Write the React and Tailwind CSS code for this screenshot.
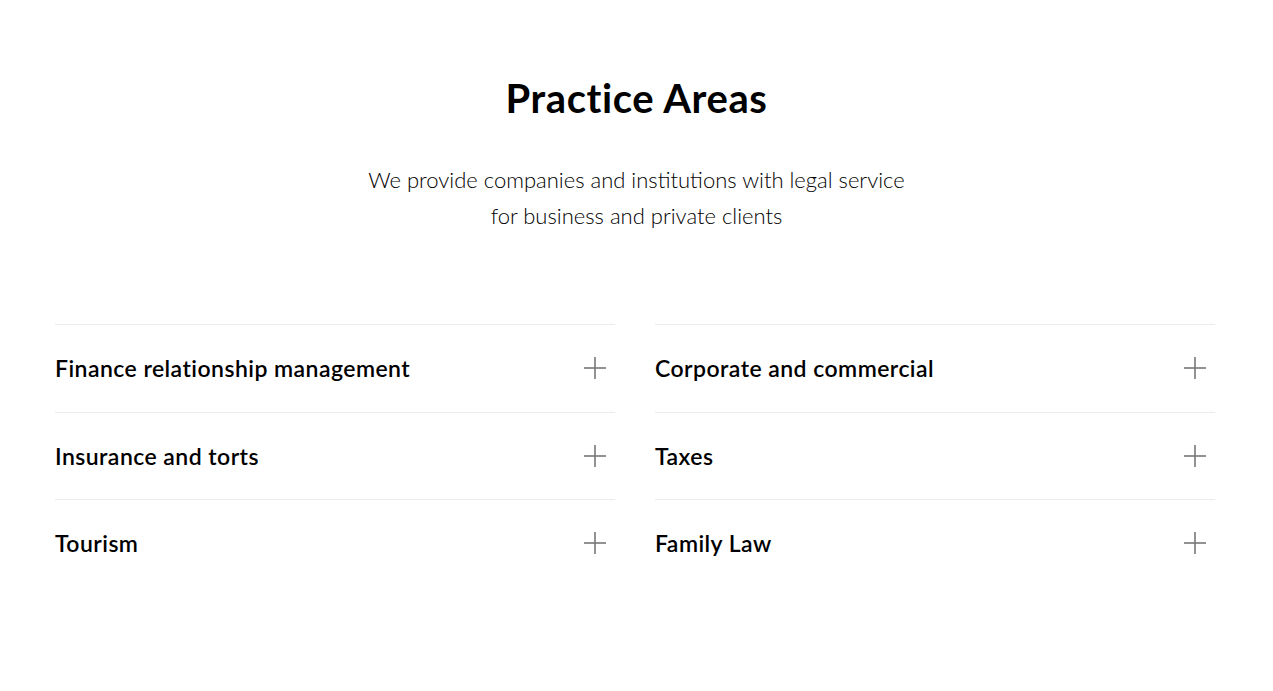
import React from 'react';

const areas = [
  'Finance relationship management',
  'Corporate and commercial',
  'Insurance and torts',
  'Taxes',
  'Tourism',
  'Family Law',
];

const PlusIcon = () => (
  <svg width="22" height="22" viewBox="0 0 22 22" fill="none">
    <line x1="0" y1="11" x2="22" y2="11" stroke="#777" strokeWidth="1.6" />
    <line x1="11" y1="0" x2="11" y2="22" stroke="#777" strokeWidth="1.6" />
  </svg>
);

const AreaRow = ({ title }) => (
  <div className="flex h-[87.5px] items-center justify-between border-t border-[#ebebeb] pr-[9px]">
    <span className="text-[23px] font-semibold tracking-[0.45px] text-black">{title}</span>
    <PlusIcon />
  </div>
);

const App = () => {
  return (
    <div className="min-h-[691px] bg-white pt-[74px] font-['Lato',sans-serif] text-black">
      {/* Heading */}
      <h2 className="text-center text-[40px] font-bold leading-[48px] tracking-[0.6px]">Practice Areas</h2>
      <p className="mt-[40px] text-center text-[22px] font-light leading-[36px] text-black">
        We provide companies and institutions with legal service
        <br />
        for business and private clients
      </p>

      {/* Areas grid */}
      <div className="ml-[55px] mt-[90px] grid w-[1160px] grid-cols-2 gap-x-[40px]">
        {areas.map((a) => (
          <AreaRow key={a} title={a} />
        ))}
      </div>
    </div>
  );
};

export default App;
